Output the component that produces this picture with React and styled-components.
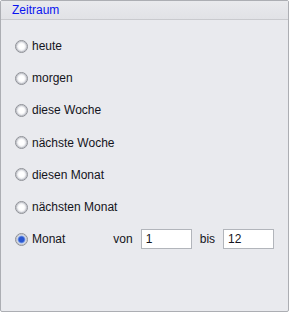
import React, { useState } from "react";
import styled, { createGlobalStyle } from "styled-components";

const Global = createGlobalStyle`
  html, body { margin: 0; padding: 0; background: #ffffff; }
  body { font-family: "Liberation Sans", Arial, sans-serif; font-size: 12px; }
`;

const options = [
  "heute",
  "morgen",
  "diese Woche",
  "nächste Woche",
  "diesen Monat",
  "nächsten Monat",
];

export default function App() {
  const [selected, setSelected] = useState("Monat");
  const [von, setVon] = useState("1");
  const [bis, setBis] = useState("12");

  return (
    <>
      <Global />
      <Panel>
        <Header>
          <Title>Zeitraum</Title>
        </Header>
        <List>
          {options.map((o) => (
            <Row key={o} onClick={() => setSelected(o)}>
              <Radio checked={selected === o} />
              <Label>{o}</Label>
            </Row>
          ))}
          <Row onClick={() => setSelected("Monat")}>
            <Radio checked={selected === "Monat"} />
            <Label>Monat</Label>
            <Range>
              <Small>von</Small>
              <Field value={von} onChange={(e) => setVon(e.target.value)} />
              <Small>bis</Small>
              <Field value={bis} onChange={(e) => setBis(e.target.value)} />
            </Range>
          </Row>
        </List>
      </Panel>
    </>
  );
}

const Panel = styled.div`
  width: 289px;
  height: 312px;
  box-sizing: border-box;
  border: 1px solid #acaeb3;
  border-radius: 2px;
  background: #e9eaee;
  display: flex;
  flex-direction: column;
`;

const Header = styled.div`
  height: 19px;
  box-sizing: border-box;
  background: linear-gradient(#e9eaed, #e1e2e6);
  border-bottom: 1px solid #c9cace;
  display: flex;
  align-items: center;
  padding-left: 11px;
`;

const Title = styled.span`
  color: #0a14f0;
  font-size: 12px;
  line-height: 14px;
`;

const List = styled.div`
  display: flex;
  flex-direction: column;
  padding-top: 10px;
`;

const Row = styled.div`
  height: 32.2px;
  display: flex;
  align-items: center;
  padding-left: 14px;
  cursor: default;
`;

const Radio = styled.span`
  width: 13px;
  height: 13px;
  box-sizing: border-box;
  border-radius: 50%;
  border: 1px solid #8f9197;
  background: ${(p) =>
    p.checked
      ? "radial-gradient(circle, #2a56d0 0 2.5px, #7d9fe6 3.5px, #eef0f6 4.5px)"
      : "radial-gradient(circle, #ffffff 0 2.5px, #e6e7eb 4.5px)"};
  box-shadow: inset 0 0 0 1px #c4c6cc;
  margin-right: 4px;
  flex: none;
`;

const Label = styled.span`
  color: #141420;
  font-size: 12px;
  line-height: 14px;
`;

const Range = styled.div`
  display: flex;
  align-items: center;
  margin-left: 48px;
`;

const Small = styled.span`
  color: #141420;
  font-size: 12px;
  margin-right: 8px;
  & + input + & {
    margin-left: 8px;
  }
`;

const Field = styled.input`
  width: 51px;
  height: 20px;
  box-sizing: border-box;
  border: 1px solid #b2b5bb;
  background: #ffffff;
  font-family: "Liberation Sans", Arial, sans-serif;
  font-size: 12px;
  color: #141420;
  padding: 0 4px;
  outline: none;
`;
